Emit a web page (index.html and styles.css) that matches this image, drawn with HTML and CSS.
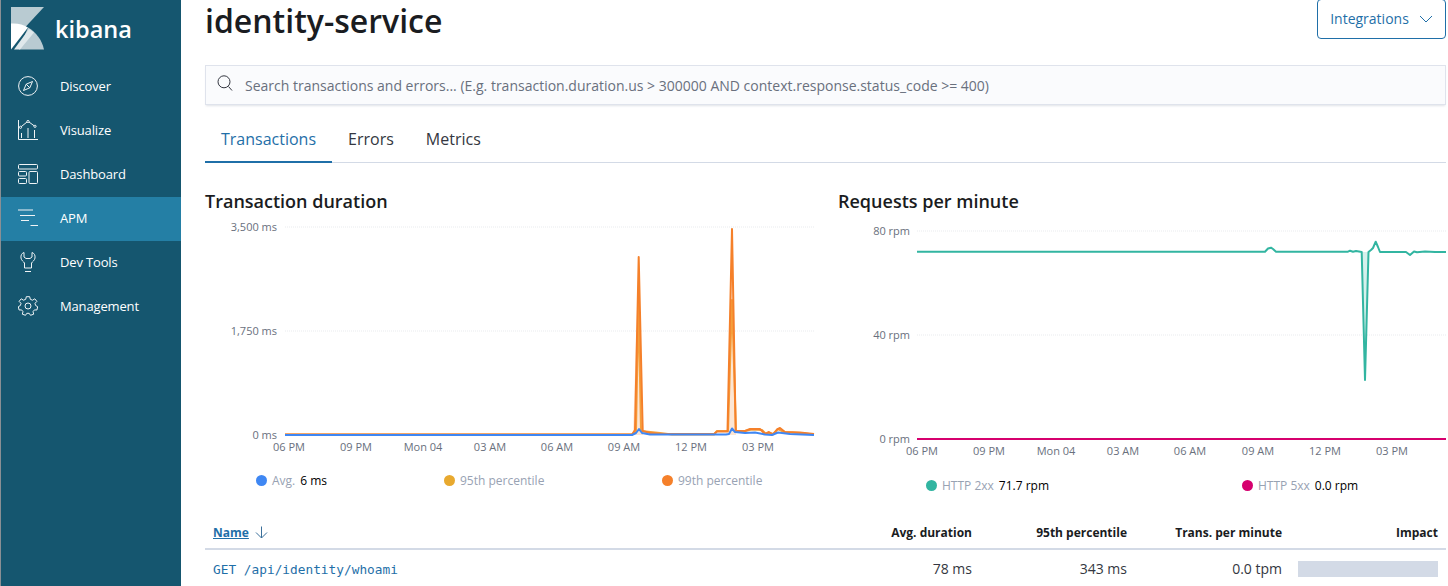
FILE: index.html
```html
<!DOCTYPE html>
<html lang="en">
<head>
<meta charset="utf-8">
<title>identity-service - Kibana</title>
<link rel="stylesheet" href="styles.css">
</head>
<body>
<div class="app">
  <aside class="sidebar">
    <div class="brand">
      <svg class="logo" width="34" height="43" viewBox="0 0 34 43">
        <polygon points="0,0 33,0 13.5,21 0,17" fill="#b9cbd2"/>
        <path d="M0 16.5 C7 16 12 17.5 17 20.5 L0 42.5 Z" fill="#fff"/>
        <path d="M17 20.5 C25 25 31 33 33 42.5 L8 42.5 Z" fill="#b9cbd2"/>
        <path d="M3 42.5 L18 22 L23 25.5 L9 42.5 Z" fill="#dfe8eb"/>
      </svg>
      <span class="brand-name">kibana</span>
    </div>
    <nav class="nav">
      <a class="nav-item">
        <svg class="nav-icon" viewBox="0 0 20 20"><circle cx="10" cy="10" r="9.4"/><path d="M14.5 5.5 L11.8 11.8 L5.5 14.5 L8.2 8.2 Z M8.2 8.2 L11.8 11.8"/></svg>
        <span>Discover</span>
      </a>
      <a class="nav-item">
        <svg class="nav-icon" viewBox="0 0 20 20"><path d="M.5 0V19.5H20"/><path d="M3.200 6.700 L9 2 M11 2 L16 5.700"/><circle cx="2.500" cy="7.300" r="1.100"/><circle cx="10" cy="1.500" r="1.100"/><circle cx="17" cy="6.300" r="1.100"/><path d="M3.500 13V18M10 8V18M16.500 10V18"/></svg>
        <span>Visualize</span>
      </a>
      <a class="nav-item">
        <svg class="nav-icon" viewBox="0 0 20 20"><rect x=".5" y=".5" width="19" height="4.5" rx="1"/><rect x=".5" y="7.5" width="8" height="4.5" rx="1"/><rect x=".5" y="14.5" width="8" height="5" rx="1"/><rect x="11" y="7.5" width="8.5" height="12" rx="1"/></svg>
        <span>Dashboard</span>
      </a>
      <a class="nav-item active">
        <svg class="nav-icon" viewBox="0 0 20 20"><path d="M0 2H15M2 7.5H17M3 12.5H11M12.500 17.500H20"/></svg>
        <span>APM</span>
      </a>
      <a class="nav-item">
        <svg class="nav-icon" viewBox="0 0 20 20"><path d="M6 .5 C3.500 1.500 2.700 3.200 3 6 C3.300 8.500 5.500 9.500 6.500 11 L6.500 16 H13.500 L13.500 11 C14.500 9.500 16.700 8.500 17 6 C17.300 3.200 16.500 1.500 14 .5 V5 L12 6.500 H8 L6 5 Z"/><path d="M7 19.500H13"/></svg>
        <span>Dev Tools</span>
      </a>
      <a class="nav-item">
        <svg class="nav-icon" viewBox="0 0 20 20"><circle cx="10" cy="10" r="3"/><path d="M8.300.7 H11.700 L12.300 3.300 L14.500 4.200 L16.800 2.800 L18.900 5.400 L17 7.300 L17.600 9.500 L19.700 10.700 L18.900 14 L16.400 13.900 L15 15.700 L15.700 18.200 L12.500 19.300 L11.200 17.300 H8.800 L7.500 19.300 L4.300 18.200 L5 15.700 L3.600 13.900 L1.100 14 L.3 10.700 L2.400 9.500 L3 7.300 L1.100 5.400 L3.200 2.800 L5.500 4.200 L7.700 3.300 Z" stroke-linejoin="round"/></svg>
        <span>Management</span>
      </a>
    </nav>
  </aside>

  <main class="content">
    <header class="page-head">
      <h1 class="page-title">identity-service</h1>
      <button class="integrations"><span class="integrations-label">Integrations</span>
        <svg width="14" height="8" viewBox="0 0 14 8"><path d="M1 1 L7 7 L13 1" fill="none" stroke="#1f6fa8" stroke-width="1"/></svg>
      </button>
    </header>

    <div class="search">
      <svg class="search-icon" width="16" height="16" viewBox="0 0 16 16"><circle cx="7" cy="6.800" r="6" fill="none" stroke="#343741" stroke-width="1"/><path d="M11.500 11.500 L15 15.500" stroke="#343741" stroke-width="1" fill="none"/></svg>
      <span class="search-text">Search transactions and errors... (E.g. transaction.duration.us &gt; 300000 AND context.response.status_code &gt;= 400)</span>
    </div>

    <div class="tabs">
      <a class="tab selected">Transactions</a>
      <a class="tab">Errors</a>
      <a class="tab">Metrics</a>
    </div>

    <section class="charts">
      <div class="chart chart-left">
        <h2 class="chart-title">Transaction duration</h2>
        <svg class="plot" width="625" height="275" viewBox="205 212 625 275">
          <g class="grid">
            <line x1="285" x2="814" y1="227" y2="227"/>
            <line x1="285" x2="814" y1="331" y2="331"/>
          </g>
          <g class="axis end">
            <text x="277" y="231">3,500 ms</text>
            <text x="277" y="335">1,750 ms</text>
            <text x="277" y="439">0 ms</text>
          </g>
          <g class="axis mid">
            <text x="289" y="451">06 PM</text>
            <text x="356" y="451">09 PM</text>
            <text x="423" y="451">Mon 04</text>
            <text x="490" y="451">03 AM</text>
            <text x="557" y="451">06 AM</text>
            <text x="624" y="451">09 AM</text>
            <text x="691" y="451">12 PM</text>
            <text x="758" y="451">03 PM</text>
          </g>
          <path class="area" d="M633 435 L638.700 257 L643 435 Z M728 435 L732 229 L736 435 Z"/>
          <path class="line" stroke="#f5a03c" d="M285 434.500 H632 L636 431 L638.500 300 L641 431 L660 433 L672 434.500 H714 L717 431 H728 L732 300 L736 432 L745 431 L752 429.500 L762 430 L766 434 L770 433 L773 434 L778 429 L784 432 L800 433 L814 434.500"/>
          <path class="line" stroke="#f5802a" d="M285 434.500 H632 L635 430 L638.700 257 L642.700 431 L650 433 L660 434 H714 L717 431.500 H727.500 L732 229 L735.700 431 L745 431 L750 429 L760 429 L765 434 L769 432 L773 434.500 L777 429.500 L780 428 L785 432 L800 432.500 L814 434"/>
          <path class="line" stroke="#3f87f3" d="M285 435 H632 L636 433 L639 429 L642 433 L650 434.500 H726 L729 434 L732 428.500 L735 432 L745 433 L755 432.500 L765 434.500 L772 435 L778 432.500 L790 434 L814 435"/>
        </svg>
        <div class="legend legend-left">
          <span class="legend-item item-avg"><i class="dot blue"></i><b>Avg.</b> <em>6 ms</em></span>
          <span class="legend-item item-95"><i class="dot yellow"></i><b>95th percentile</b></span>
          <span class="legend-item"><i class="dot orange"></i><b>99th percentile</b></span>
        </div>
      </div>

      <div class="chart chart-right">
        <h2 class="chart-title">Requests per minute</h2>
        <svg class="plot" width="608" height="275" viewBox="838 212 608 275">
          <g class="grid">
            <line x1="917" x2="1446" y1="231" y2="231"/>
            <line x1="917" x2="1446" y1="335" y2="335"/>
          </g>
          <g class="axis end">
            <text x="910" y="235">80 rpm</text>
            <text x="910" y="339">40 rpm</text>
            <text x="910" y="443">0 rpm</text>
          </g>
          <g class="axis mid">
            <text x="922" y="455">06 PM</text>
            <text x="989" y="455">09 PM</text>
            <text x="1056" y="455">Mon 04</text>
            <text x="1123" y="455">03 AM</text>
            <text x="1190" y="455">06 AM</text>
            <text x="1258" y="455">09 AM</text>
            <text x="1325" y="455">12 PM</text>
            <text x="1392" y="455">03 PM</text>
          </g>
          <path class="area-green" d="M1361.700 252 L1365 380 L1368.500 252 Z"/>
          <path class="line" stroke="#32b5a1" d="M917 251.700 H1265 L1268 248.500 L1271 247.700 L1273 249 L1276 251.700 H1348 L1350 250.700 L1353 251.700 L1356 251 L1361.700 252 L1365 380 L1368.500 252 L1371 250 L1373 248 L1375.700 241.700 L1378 247 L1380 252 H1406 L1410 255 L1414 251.500 L1417 252.300 L1425 251.500 L1435 252 H1446"/>
          <path class="line pink" stroke="#d6006e" d="M917 439 H1446"/>
        </svg>
        <div class="legend legend-right">
          <span class="legend-item item-2xx"><i class="dot green"></i><b>HTTP 2xx</b> <em>71.7 rpm</em></span>
          <span class="legend-item"><i class="dot pink-dot"></i><b>HTTP 5xx</b> <em>0.0 rpm</em></span>
        </div>
      </div>
    </section>

    <table class="tx-table">
      <thead>
        <tr>
          <th class="col-name"><a class="sort-link">Name</a>
            <svg width="13" height="13" viewBox="0 0 13 13"><path d="M6.500 .5 V12 M1 6.500 L6.500 12 L12 6.500" fill="none" stroke="#3a6f9a" stroke-width="1"/></svg>
          </th>
          <th class="col-num col-avg">Avg. duration</th>
          <th class="col-num col-p95">95th percentile</th>
          <th class="col-num col-tpm">Trans. per minute</th>
          <th class="col-num col-impact">Impact</th>
        </tr>
      </thead>
      <tbody>
        <tr>
          <td class="col-name"><a class="tx-link">GET /api/identity/whoami</a></td>
          <td class="col-num">78 ms</td>
          <td class="col-num">343 ms</td>
          <td class="col-num">0.0 tpm</td>
          <td class="col-num"><div class="impact-bar"></div></td>
        </tr>
      </tbody>
    </table>
  </main>
</div>
</body>
</html>
```

FILE: styles.css
```css
* { box-sizing: border-box; }
html, body { margin: 0; height: 100%; overflow: hidden; background: #fff; }
body { font-family: "Open Sans", sans-serif; color: #1a1c21; }

.app { display: flex; height: 586px; overflow: hidden; border-left: 1px solid #8a8f94; }

.sidebar { width: 180px; flex: none; background: #15566f; color: #fff; }
.brand { display: flex; align-items: center; height: 59px; padding: 7px 0 9px 10px; }
.logo { flex: none; }
.brand-name { margin-left: 11px; font-size: 23.500px; font-weight: 600; color: #fff; line-height: 1; margin-top: 2px; margin-left: 10px; }
.nav { display: flex; flex-direction: column; margin-top: 6px; }
.nav-item { display: flex; align-items: center; height: 44px; padding: 0 0 2px 17px; font-size: 13px; font-weight: 500; letter-spacing: -.15px; color: #fff; }
.nav-item.active { background: #247fa5; }
.nav-icon { width: 20px; height: 20px; margin-right: 22px; fill: none; stroke: #f0f4f6; stroke-width: 1; flex: none; }

.content { flex: 1; min-width: 0; padding: 0 2px 0 24px; }
.page-head { display: flex; justify-content: space-between; height: 65px; margin-top: -1px; }
.page-title { margin: 0; font-size: 32px; font-weight: 600; line-height: 44px; color: #1a1c21; }
.integrations { width: 129px; height: 40px; padding: 0; display: flex; align-items: center; justify-content: center; gap: 10px; background: #fff; border: 1px solid #1f6fa8; border-radius: 4px; font: 400 14px "Open Sans", sans-serif; color: #1f6fa8; }
.integrations-label { margin-top: -2px; }

.search { display: flex; align-items: center; height: 40px; margin-top: 1px; padding-left: 11px; background: #fafbfd; border: 1px solid #dfe3ec; box-shadow: 0 2px 2px -1px rgba(152,162,179,.3); }
.search-icon { flex: none; margin-right: 12px; margin-top: -4px; }
.search-text { font-size: 14px; color: #69707d; white-space: nowrap; }

.tabs { display: flex; height: 58px; border-bottom: 1px solid #d3dae6; }
.tab { display: flex; align-items: center; height: 58px; padding: 12px 16px 0; font-size: 16px; color: #343741; border-bottom: 2px solid transparent; }
.tab.selected { color: #1f6fa8; border-bottom-color: #1f6fa8; }

.charts { display: flex; margin-top: 27px; }
.chart { flex: none; }
.chart-left { width: 633px; }
.chart-right { width: 608px; }
.chart-title { margin: 0; font-size: 18px; font-weight: 600; line-height: 22px; color: #1a1c21; }
.plot { display: block; }
.grid line { stroke: #e9ebee; stroke-width: 1; stroke-dasharray: 1 1; }
.axis text { font-family: "Open Sans", sans-serif; font-size: 11px; fill: #69707d; }
.axis.end text { text-anchor: end; }
.axis.mid text { text-anchor: middle; }
.line { fill: none; stroke-width: 2; stroke-linejoin: round; }
.area { fill: #f5802a; fill-opacity: .2; }
.area-green { fill: #32b5a1; fill-opacity: .2; }

.legend { display: flex; height: 20px; font-size: 12px; align-items: center; }
.legend-left { padding-left: 51px; margin-top: -17px; }
.legend-right { padding-left: 88px; margin-top: -12px; }
.legend-item { display: flex; align-items: center; white-space: nowrap; }
.item-avg { width: 188px; }
.item-95 { width: 218px; }
.item-2xx { width: 316px; }
.legend-item b { font-weight: 400; color: #98a2b3; margin-right: 5px; }
.legend-item em { font-style: normal; color: #000; }
.dot { width: 11px; height: 11px; border-radius: 50%; margin-right: 5px; flex: none; }
.blue { background: #3f87f3; }
.yellow { background: #e8a92f; }
.orange { background: #f5802a; }
.green { background: #32b5a1; }
.pink-dot { background: #d6006e; }

.tx-table { width: 1241px; margin-top: 21px; border-collapse: collapse; table-layout: fixed; }
.tx-table th { height: 33px; padding: 0 8px; font-size: 12px; font-weight: 700; color: #1a1c21; border-bottom: 2px solid #d3dae6; white-space: nowrap; }
.tx-table td { height: 38px; padding: 0 8px; font-size: 14px; color: #343741; }
.col-name { text-align: left; width: 628px; }
.col-num { text-align: right; }
.col-avg { width: 147px; }
.col-p95 { width: 155px; }
.col-tpm { width: 155px; }
.col-impact { width: 156px; }
.sort-link { color: #1f6fa8; text-decoration: underline; }
.col-name svg { margin-left: 3px; vertical-align: -2px; }
.tx-link { font-family: "DejaVu Sans Mono", monospace; font-size: 12.800px; color: #1f6fa8; }
.impact-bar { width: 140px; height: 16px; margin-left: auto; background: #d3dae6; }
```
